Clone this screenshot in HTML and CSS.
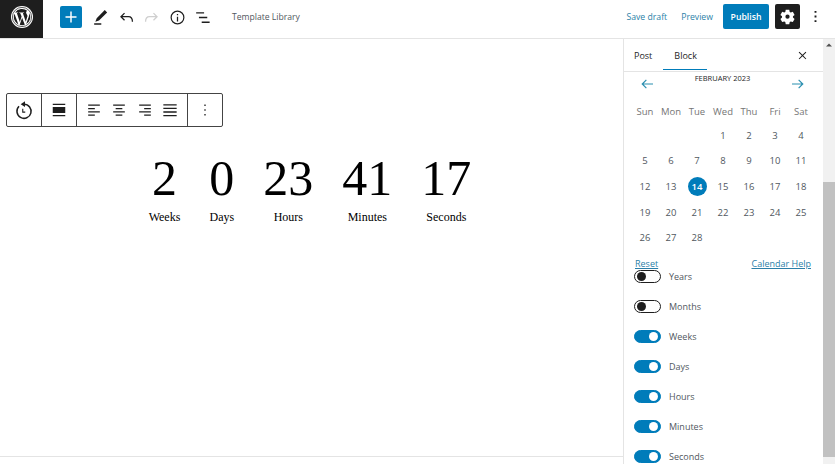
FILE: index.html
```html
<!DOCTYPE html>
<html lang="en">
<head>
<meta charset="utf-8">
<title>Template Library</title>
<link rel="stylesheet" href="styles.css">
</head>
<body>
<header class="topbar">
  <div class="wp-logo">
    <svg viewBox="0 0 24 24" width="24" height="24"><circle cx="12" cy="12" r="11" fill="#fff"/><circle cx="12" cy="12" r="9.6" fill="none" stroke="#1e1e1e" stroke-width=".7"/><path fill="#1e1e1e" d="M3.8 12c0 3.2 1.9 6 4.6 7.4L4.5 8.7A8.2 8.2 0 0 0 3.8 12zm13.8-.4c0-1-.4-1.7-.7-2.2-.4-.7-.8-1.2-.8-1.9 0-.7.5-1.4 1.3-1.4h.1A8.2 8.2 0 0 0 5.1 7.5h.5c.9 0 2.2-.1 2.2-.1.4 0 .5.6 0 .7 0 0-.4 0-.9.1l2.9 8.7 1.8-5.3-1.3-3.4c-.4 0-.8-.1-.8-.1-.4 0-.4-.7 0-.7 0 0 1.3.1 2.1.1.9 0 2.2-.1 2.2-.1.4 0 .5.6 0 .7 0 0-.4 0-.9.1l2.9 8.6.8-2.7c.3-1.1.6-1.9.6-2.6zM12.1 12.7l-2.4 7.1a8.2 8.2 0 0 0 5.1-.1l-.1-.1-2.6-6.9zm7.1-4.7c0 .3.1.6.1.9 0 .8-.2 1.8-.6 3l-2.5 7.2A8.2 8.2 0 0 0 19.2 8z"/></svg>
  </div>
  <div class="tools">
    <button class="add-btn"><svg viewBox="0 0 24 24" width="22" height="22"><path fill="#fff" d="M18 11.2h-5.2V6h-1.6v5.2H6v1.6h5.2V18h1.6v-5.2H18z"/></svg></button>
    <svg class="tool" viewBox="0 0 24 24"><path fill="#1e1e1e" d="M20.400 5.600 17.400 2.600 7.200 12.800l-1.700 4.500 4.600-1.600zM4 21h9v-1.700H4z"/></svg>
    <svg class="tool" viewBox="0 0 24 24"><path fill="none" stroke="#1e1e1e" stroke-width="1.600" d="M9.500 6.500 5 11l4.500 4.500M5 11h9.500c3.500 0 5 2 5 6.500"/></svg>
    <svg class="tool" viewBox="0 0 24 24"><path fill="none" stroke="#cfcfcf" stroke-width="1.600" d="M14.500 6.500 19 11l-4.500 4.500M19 11H9.500c-3.500 0-5 2-5 6.500"/></svg>
    <svg class="tool" viewBox="0 0 24 24"><path fill="#1e1e1e" d="M12 3.200a8.800 8.800 0 1 0 0 17.600 8.800 8.800 0 0 0 0-17.600zm0 16.100a7.300 7.300 0 1 1 0-14.600 7.300 7.300 0 0 1 0 14.600zM11.200 11h1.600v6h-1.600zm0-3.500h1.600v1.600h-1.600z"/></svg>
    <svg class="tool" viewBox="0 0 24 24"><path fill="#1e1e1e" d="M4 5.500h10v1.600H4zM7.500 11.200H18v1.600H7.500zM11 17.200h10v1.600H11z"/></svg>
    <span class="doc-title">Template Library</span>
  </div>
  <div class="actions">
    <a class="action-link">Save draft</a>
    <a class="action-link preview">Preview</a>
    <button class="publish">Publish</button>
    <button class="settings"><svg viewBox="0 0 24 24" width="17" height="17"><path fill="#fff" fill-rule="evenodd" d="M14.500 2.500h-5l-.6 3a6.600 6.600 0 0 0-1.500.9l-2.900-1-2.500 4.400 2.300 2a6.700 6.700 0 0 0 0 1.700l-2.300 2 2.500 4.400 2.900-1c.5.4 1 .7 1.500.9l.6 3h5l.6-3c.5-.2 1-.5 1.500-.9l2.900 1 2.500-4.400-2.300-2a6.700 6.700 0 0 0 0-1.700l2.300-2-2.500-4.400-2.900 1a6.600 6.600 0 0 0-1.500-.9zM12 15.200a3 3 0 1 0 0-6 3 3 0 0 0 0 6z"/></svg></button>
    <svg class="more" viewBox="0 0 24 24"><path fill="#1e1e1e" d="M10.800 5h2.400v2.400h-2.400zM10.800 10.800h2.400v2.400h-2.400zM10.800 16.600h2.400V19h-2.400z"/></svg>
  </div>
</header>
<div class="workspace">
  <main class="editor">
    <div class="block-toolbar">
      <div class="tb-group w35"><svg viewBox="0 0 24 24" width="20" height="20"><path fill="none" stroke="#1e1e1e" stroke-width="1.800" d="M12 5a8.500 8.500 0 1 1-6 2.500"/><path fill="#1e1e1e" d="M13.200 1.500v7L8 5z"/><path fill="none" stroke="#1e1e1e" stroke-width="1.300" d="M10.500 10.500v4h3"/></svg></div>
      <div class="tb-group w35"><svg viewBox="0 0 24 24" width="20" height="20"><path fill="#1e1e1e" d="M4.500 4.500h15v1.500h-15zM4.500 8.500h15v7h-15zM4.500 18h15v1.500h-15z"/></svg></div>
      <div class="tb-group aligns">
        <svg viewBox="0 0 24 24"><path fill="#1e1e1e" d="M5 5.500h14v1.500H5zM5 9.500h8v1.500H5zM5 13.500h14v1.500H5zM5 17.500h8v1.500H5z"/></svg>
        <svg viewBox="0 0 24 24"><path fill="#1e1e1e" d="M5 5.500h14v1.500H5zM8 9.500h8v1.500H8zM5 13.500h14v1.500H5zM8 17.500h8v1.500H8z"/></svg>
        <svg viewBox="0 0 24 24"><path fill="#1e1e1e" d="M5 5.500h14v1.500H5zM11 9.500h8v1.500h-8zM5 13.500h14v1.500H5zM11 17.500h8v1.500h-8z"/></svg>
        <svg viewBox="0 0 24 24"><path fill="#1e1e1e" d="M4 5h16v1.600H4zM4 9.300h16v1.600H4zM4 13.600h16v1.600H4zM4 17.900h16v1.600H4z"/></svg>
      </div>
      <div class="tb-group w34"><svg viewBox="0 0 24 24" width="20" height="20"><path fill="#1e1e1e" d="M11.200 5.500h1.600v1.800h-1.600zM11.200 11.100h1.600v1.800h-1.600zM11.200 16.700h1.600v1.800h-1.600z"/></svg></div>
    </div>
    <div class="countdown">
      <div class="unit"><div class="num">2</div><div class="lbl">Weeks</div></div>
      <div class="unit"><div class="num">0</div><div class="lbl">Days</div></div>
      <div class="unit"><div class="num">23</div><div class="lbl">Hours</div></div>
      <div class="unit"><div class="num">41</div><div class="lbl">Minutes</div></div>
      <div class="unit"><div class="num">17</div><div class="lbl">Seconds</div></div>
    </div>
  </main>
  <aside class="sidebar">
    <div class="tabs">
      <span class="tab">Post</span>
      <span class="tab active">Block</span>
      <svg class="close" viewBox="0 0 24 24"><path fill="#1e1e1e" d="M13.100 12l5-5-1.100-1.100-5 5-5-5L5.900 7l5 5-5 5L7 18.100l5-5 5 5 1.100-1.100z"/></svg>
    </div>
    <div class="month-nav">
      <svg viewBox="0 0 24 24"><path fill="#2b8fb0" d="M20 11.200H7.500l4.200-4.200-1.100-1.100L4.500 12l6.100 6.100 1.100-1.100-4.200-4.200H20z"/></svg>
      <span class="month">FEBRUARY 2023</span>
      <svg viewBox="0 0 24 24"><path fill="#2b8fb0" d="M4 11.200h12.500L12.300 7l1.100-1.100 6.100 6.100-6.100 6.100-1.100-1.100 4.200-4.200H4z"/></svg>
    </div>
    <div class="calendar">
      <span class="dow">Sun</span><span class="dow">Mon</span><span class="dow">Tue</span><span class="dow">Wed</span><span class="dow">Thu</span><span class="dow">Fri</span><span class="dow">Sat</span>
      <span></span><span></span><span></span><span>1</span><span>2</span><span>3</span><span>4</span>
      <span>5</span><span>6</span><span>7</span><span>8</span><span>9</span><span>10</span><span>11</span>
      <span>12</span><span>13</span><span class="today">14</span><span>15</span><span>16</span><span>17</span><span>18</span>
      <span>19</span><span>20</span><span>21</span><span>22</span><span>23</span><span>24</span><span>25</span>
      <span>26</span><span>27</span><span>28</span>
    </div>
    <div class="cal-links"><a>Reset</a><a>Calendar Help</a></div>
    <ul class="toggles">
      <li><span class="toggle"></span>Years</li>
      <li><span class="toggle"></span>Months</li>
      <li><span class="toggle on"></span>Weeks</li>
      <li><span class="toggle on"></span>Days</li>
      <li><span class="toggle on"></span>Hours</li>
      <li><span class="toggle on"></span>Minutes</li>
      <li><span class="toggle on"></span>Seconds</li>
    </ul>
  </aside>
  <div class="scrollbar">
    <svg viewBox="0 0 12 12" width="12" height="12"><path fill="#505050" d="M3 7.500 6 4.500l3 3z"/></svg>
    <div class="thumb"></div>
  </div>
</div>
</body>
</html>
```
FILE: styles.css
```css
* { box-sizing: border-box; }
html, body { margin: 0; height: 100%; }
body {
  width: 835px;
  height: 464px;
  overflow: hidden;
  background: #fff;
  color: #1e1e1e;
  font-family: "Open Sans", "Noto Sans", sans-serif;
  font-size: 9px;
  display: flex;
  flex-direction: column;
}
button { border: 0; padding: 0; font: inherit; cursor: pointer; }
.topbar {
  height: 39px;
  flex: none;
  display: flex;
  align-items: flex-start;
  border-bottom: 1px solid #e4e4e4;
}
.wp-logo {
  width: 43px;
  height: 38px;
  padding-bottom: 4px;
  background: #1e1e1e;
  display: flex;
  align-items: center;
  justify-content: center;
}
.tools {
  display: flex;
  align-items: center;
  height: 34px;
  margin-left: 17px;
}
.add-btn {
  width: 22px;
  height: 22px;
  background: #007cba;
  border-radius: 2px;
  display: flex;
}
.tool { width: 19px; height: 19px; margin-left: 6.500px; }
.add-btn + .tool { margin-left: 9px; }
.doc-title { margin-left: 20px; color: #50575e; font-size: 8.600px; }
.actions {
  margin-left: auto;
  height: 25px;
  margin-top: 4px;
  display: flex;
  align-items: center;
}
.action-link { color: #2b7fa8; font-size: 8.700px; margin-right: 14px; }
.action-link.preview { margin-right: 10px; }
.publish {
  width: 46px;
  height: 25px;
  background: #007cba;
  color: #fff;
  border-radius: 2px;
  font-size: 8.700px;
  font-weight: 600;
}
.settings {
  width: 25px;
  height: 25px;
  margin-left: 6px;
  background: #1e1e1e;
  border-radius: 2px;
  display: flex;
  align-items: center;
  justify-content: center;
}
.more { width: 19px; height: 19px; margin: 0 10px 0 6px; }
.workspace { flex: 1; display: flex; min-height: 0; }
.editor {
  width: 623px;
  flex: none;
  height: 418px;
  border-bottom: 1px solid #e4e4e4;
  padding: 54px 0 0 6px;
}
.block-toolbar {
  display: inline-flex;
  height: 34px;
  border: 1px solid #444;
  border-radius: 2px;
}
.tb-group {
  display: flex;
  align-items: center;
  justify-content: center;
  border-right: 1px solid #444;
}
.tb-group svg { flex: none; }
.tb-group.w34 { border-right: 0; width: 34px; }
.w35 { width: 35px; }
.aligns { width: 111px; gap: 5.500px; }
.aligns svg { width: 20px; height: 20px; }
.countdown {
  display: flex;
  justify-content: center;
  gap: 29px;
  margin: 21px 9px 0 0;
  font-family: "Liberation Serif", serif;
  color: #000;
  text-align: center;
}
.num { font-size: 50px; line-height: 60px; min-width: 25px; }
.lbl { font-size: 12px; line-height: 14px; margin-top: 2px; white-space: nowrap; }
.sidebar {
  width: 200px;
  flex: none;
  border-left: 1px solid #e4e4e4;
  position: relative;
  overflow: hidden;
  height: 425px;
}
.tabs {
  height: 33px;
  display: flex;
  align-items: center;
  border-bottom: 1px solid #e4e4e4;
}
.tab { font-size: 9px; color: #1e1e1e; padding-top: 1px; }
.tab:first-child { margin-left: 10px; }
.tab.active {
  margin-left: 22px;
  position: relative;
}
.tab.active::after {
  content: "";
  position: absolute;
  left: -11px;
  right: -10px;
  top: 21px;
  height: 1px;
  background: #007cba;
}
.close { margin-left: auto; margin-right: 13px; width: 15px; height: 15px; }
.month-nav {
  display: flex;
  justify-content: space-between;
  align-items: flex-start;
  padding: 2px 16px 0 14px;
  height: 29px;
}
.month-nav svg { width: 18px; height: 18px; margin-top: 1px; }
.month { font-size: 7.500px; line-height: 10px; margin-top: -1px; color: #1e1e1e; }
.calendar {
  display: grid;
  grid-template-columns: repeat(7, 26px);
  grid-template-rows: 21.600px;
  grid-auto-rows: 25.600px;
  margin: 0 0 0 8px;
  font-size: 9.500px;
  color: #50575e;
  text-align: center;
}
.calendar span { display: flex; align-items: center; justify-content: center; }
.dow { color: #757575; }
.today {
  width: 19px;
  height: 19px;
  margin: auto;
  border-radius: 50%;
  background: #007cba;
  color: #fff;
  font-weight: 600;
}
.cal-links {
  display: flex;
  justify-content: space-between;
  margin: 7.400px 12px 0 11px;
  line-height: 12px;
  height: 12px;
  font-size: 9px;
}
.cal-links a { color: #2b7fa8; text-decoration: underline; }
.toggles {
  list-style: none;
  margin: 0;
  padding: 0 0 0 10px;
  color: #50575e;
  font-size: 9px;
}
.toggles li {
  height: 30px;
  display: flex;
  align-items: flex-start;
  line-height: 13px;
}
.toggle {
  width: 27px;
  height: 13px;
  margin-right: 8px;
  border: 1px solid #1e1e1e;
  border-radius: 7px;
  position: relative;
  background: #fff;
}
.toggle::after {
  content: "";
  position: absolute;
  left: 2px;
  top: 1px;
  width: 9px;
  height: 9px;
  border-radius: 50%;
  background: #1e1e1e;
}
.toggle.on { background: #007cba; border-color: #007cba; }
.toggle.on::after { left: auto; right: 2px; background: #fff; }
.scrollbar {
  width: 12px;
  flex: none;
  height: 425px;
  background: #f1f1f1;
  display: flex;
  flex-direction: column;
}
.scrollbar svg { flex: none; }
.thumb { background: #c1c1c1; height: 275px; margin-top: 131px; }
```
